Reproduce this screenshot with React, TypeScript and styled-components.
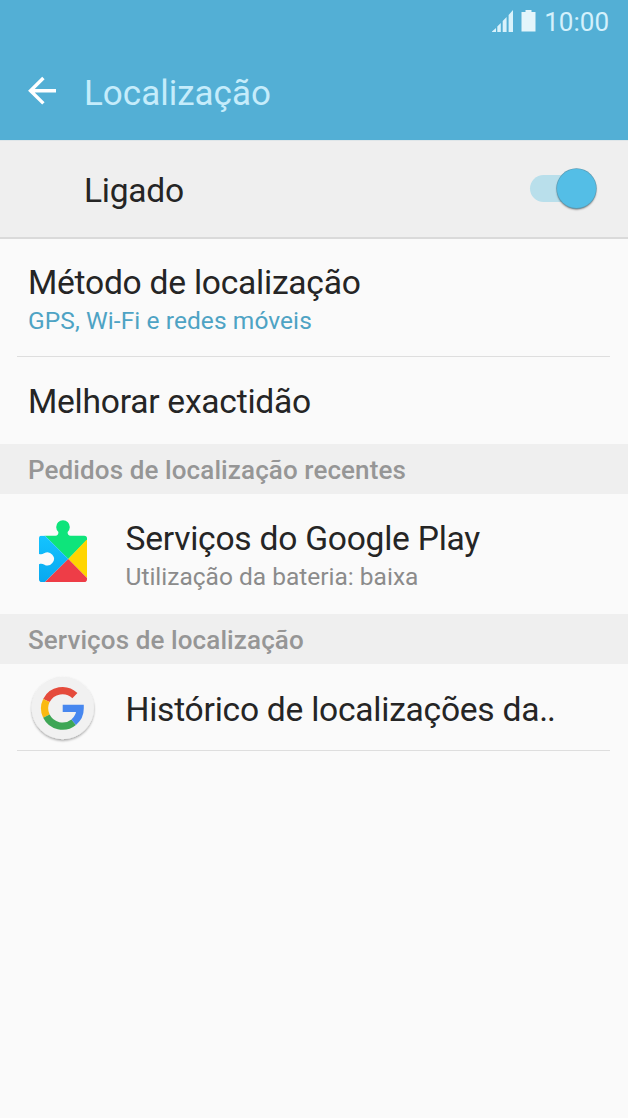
import React from "react";
import styled, { createGlobalStyle } from "styled-components";

const GlobalStyle = createGlobalStyle`
  * { box-sizing: border-box; }
  html, body { margin: 0; background: #fafafa; }
  body { font-family: Roboto, "Liberation Sans", sans-serif; color: #252525; }
  svg { display: block; flex: none; }
`;

const Screen = styled.main`
  display: flex;
  flex-direction: column;
  width: 628px;
  height: 1118px;
  background: #fafafa;
  overflow: hidden;
  white-space: nowrap;
`;

const Header = styled.header`
  height: 140px;
  background: #53afd5;
  flex: none;
`;

const StatusBar = styled.div`
  display: flex;
  justify-content: flex-end;
  align-items: center;
  height: 42px;
  padding-right: 19px;
`;

const Clock = styled.span`
  margin-left: 8px;
  padding-top: 2px;
  font-size: 26px;
  line-height: 42px;
  color: #d4f1fc;
`;

const TitleBar = styled.div`
  display: flex;
  align-items: center;
  height: 98px;
  padding: 0 28px 0 27px;
`;

const Title = styled.h1`
  margin: 0 0 0 27px;
  font-size: 35px;
  font-weight: 400;
  line-height: 92px;
  padding-top: 6px;
  color: #c5ecfb;
`;

const MasterRow = styled.div`
  display: flex;
  align-items: center;
  justify-content: space-between;
  flex: none;
  height: 99px;
  padding: 0 32px 0 84px;
  background: #efefef;
  border-top: 1px solid #dfe6e9;
  border-bottom: 2px solid #dadada;
`;

const Row = styled.div<{ $height: number; $top?: number }>`
  display: flex;
  align-items: center;
  flex: none;
  height: ${(p) => p.$height}px;
  padding: ${(p) => p.$top ?? 0}px 28px 0;
`;

const Divider = styled.hr`
  flex: none;
  width: 593px;
  height: 1px;
  margin: 0 0 0 17px;
  border: 0;
  background: #dedede;
`;

const IconSlot = styled.div<{ $lift?: number }>`
  width: 97.5px;
  flex: none;
  padding-bottom: ${(p) => p.$lift ?? 0}px;
`;

const Labels = styled.div`
  display: flex;
  flex-direction: column;
`;

const Label = styled.span<{ $top?: number }>`
  padding-top: ${(p) => p.$top ?? 0}px;
  font-size: 33.6px;
  line-height: 42px;
  letter-spacing: -0.25px;
`;

const Dots = styled.span`
  letter-spacing: -1.2px;
`;

const Summary = styled.span<{ $accent?: boolean }>`
  font-size: 24.5px;
  line-height: 33px;
  padding-bottom: 2px;
  letter-spacing: ${(p) => (p.$accent ? 0.08 : 0)}px;
  color: ${(p) => (p.$accent ? "#4ea3c4" : "#8b8b8b")};
`;

const SectionHeader = styled.h2`
  flex: none;
  height: 50px;
  margin: 0;
  padding: 1px 28px 0;
  background: #efefef;
  color: #969696;
  font-size: 26px;
  font-weight: 500;
  line-height: 50px;
  letter-spacing: 0.1px;
`;

const SwitchTrack = styled.div`
  display: flex;
  align-items: center;
  justify-content: flex-end;
  width: 66px;
  height: 27px;
  margin-bottom: 1px;
  border-radius: 14px;
  background: #b9dfeb;
`;

const SwitchThumb = styled.div`
  width: 39px;
  height: 39px;
  flex: none;
  border-radius: 50%;
  background: #54bee6;
  box-shadow: 0 0 0 0.7px #5a9db6, 0 1.5px 2px rgba(0, 0, 0, 0.55);
`;

const SignalIcon = () => (
  <svg width="22" height="22" viewBox="0 0 22 22" fill="#d9f2fb">
    <path d="M0 22V21.5L4 18V22ZM5.3 22V16.5L8.8 13V22ZM10.7 22V11L14.6 7V22ZM16.6 22V5L21 0V22Z" />
  </svg>
);

const Battery = styled.svg`
  margin-left: 7px;
`;

const BatteryIcon = () => (
  <Battery width="15" height="22" viewBox="0 0 15 22" fill="#e4f5fb">
    <path d="M0.5 2H4.5V0H10.5V2H14.5V21.5H0.5Z" />
  </Battery>
);

const BackIcon = () => (
  <svg width="30" height="30" viewBox="0 0 30 30" fill="none" stroke="#fff" strokeWidth="3.4">
    <path d="M29 14.7H3M16.4 2L3.5 14.7L16.4 27.4" />
  </svg>
);

const PlayServicesIcon = () => (
  <svg width="70" height="66" viewBox="0 0 70 66">
    <defs>
      <linearGradient id="blue" x2="0" y2="1">
        <stop stopColor="#14c4ff" />
        <stop offset="1" stopColor="#08a8f0" />
      </linearGradient>
      <clipPath id="piece">
        <path d="M13 17.8H27.5Q30.4 17.8 30.4 14A6.8 6.8 0 1 1 39.6 14Q39.6 17.8 42.5 17.8H56.2Q59 17.8 59 20.6V61.2Q59 64 56.2 64H13.8Q11 64 11 61.2V46.2C13 45.3 14.8 45.8 16 46.4A6.5 6.5 0 1 0 16 35.3C14.5 36.4 13 36.5 11 36V20.6Q11 17.8 13 17.8Z" />
      </clipPath>
    </defs>
    <g clipPath="url(#piece)">
      <path fill="#0ee47b" d="M8 0H62V19L40.3 41L16.7 17.6Z" />
      <path fill="url(#blue)" d="M8 17.6H16.7L40.3 41L17 64H8Z" />
      <path fill="#ffd500" d="M62 18V63L40.3 41Z" />
      <path fill="#ee3d47" d="M40.3 41L63 64V66H15Z" />
    </g>
  </svg>
);

const GoogleIcon = () => (
  <svg width="70" height="70" viewBox="0 0 70 70">
    <defs>
      <filter id="lift" x="-20%" y="-20%" width="140%" height="140%">
        <feDropShadow dx="0" dy="1.5" stdDeviation="1" floodOpacity=".35" />
      </filter>
    </defs>
    <circle cx="34.8" cy="34" r="31.2" fill="#f1f1f1" filter="url(#lift)" />
    <g fill="none" strokeWidth="7.2" transform="translate(0 -1)">
      <path stroke="#e54b3c" d="M46.9 22.7A17.9 17.9 0 0 0 18.4 27.5" />
      <path stroke="#fab911" d="M18.4 27.5A17.9 17.9 0 0 0 18.4 43.2" />
      <path stroke="#3ea656" d="M18.4 43.2A17.9 17.9 0 0 0 45.7 49.2" />
      <path stroke="#4787ef" d="M45.7 49.2A17.9 17.9 0 0 0 52.2 35.3H34.7" />
    </g>
  </svg>
);

export default function App() {
  return (
    <Screen>
      <GlobalStyle />
      <Header>
        <StatusBar>
          <SignalIcon />
          <BatteryIcon />
          <Clock>10:00</Clock>
        </StatusBar>
        <TitleBar>
          <BackIcon />
          <Title>Localização</Title>
        </TitleBar>
      </Header>
      <MasterRow>
        <Label $top={3}>Ligado</Label>
        <SwitchTrack>
          <SwitchThumb />
        </SwitchTrack>
      </MasterRow>
      <Row $height={117} $top={5}>
        <Labels>
          <Label>Método de localização</Label>
          <Summary $accent>GPS, Wi-Fi e redes móveis</Summary>
        </Labels>
      </Row>
      <Divider />
      <Row $height={87} $top={2}>
        <Label>Melhorar exactidão</Label>
      </Row>
      <SectionHeader>Pedidos de localização recentes</SectionHeader>
      <Row $height={120} $top={5}>
        <IconSlot $lift={11}>
          <PlayServicesIcon />
        </IconSlot>
        <Labels>
          <Label>Serviços do Google Play</Label>
          <Summary>Utilização da bateria: baixa</Summary>
        </Labels>
      </Row>
      <SectionHeader>Serviços de localização</SectionHeader>
      <Row $height={86} $top={4}>
        <IconSlot>
          <GoogleIcon />
        </IconSlot>
        <Label $top={2}>
          Histórico de localizações da<Dots>..</Dots>
        </Label>
      </Row>
      <Divider />
    </Screen>
  );
}
